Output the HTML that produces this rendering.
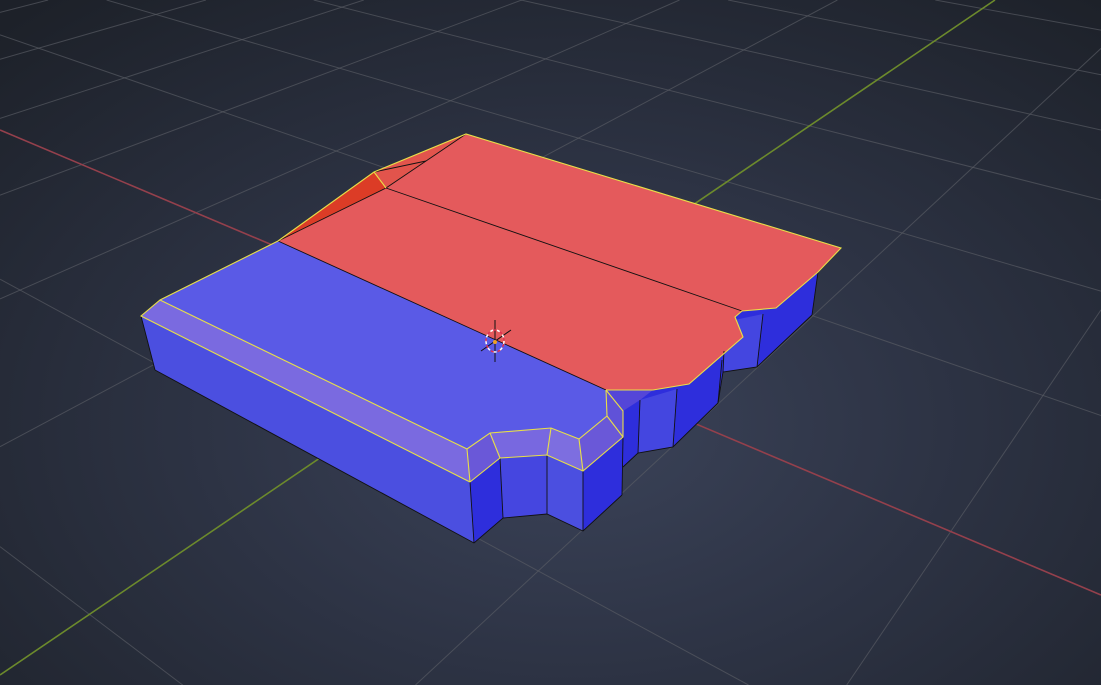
<!DOCTYPE html>
<html><head><meta charset="utf-8"><style>
html,body{margin:0;padding:0;overflow:hidden;width:1101px;height:685px}
body{background:radial-gradient(ellipse 75% 80% at 52% 62%,#3b4359 0%,#2d3344 45%,#1d2129 100%)}
svg{position:absolute;left:0;top:0;overflow:hidden;display:block}
</style></head><body>
<svg id="s" width="1101" height="685" viewBox="0 0 1101 685">
<g id="grid" stroke="#5a5d66" stroke-opacity="0.65" stroke-width="1" fill="none"></g>
<line x1="0" y1="130" x2="1101" y2="595" stroke="#94404c" stroke-width="1.6"/>
<line x1="0" y1="675" x2="995" y2="0" stroke="#6c8a2c" stroke-width="1.6"/>

<polygon fill="#2e2edc" points="141,316 155,370 474,543 503,518 547,514 583,531 622,495 623,467 638,453 673,447 718,403 723,372 757,367 812,315 818,272 841,248 606,390"/>
<polygon fill="#4b4fe0" points="141,316 470,482 474,543 155,370"/>
<polygon fill="#4546e0" points="500,458 547,455 547,514 503,518"/>
<polygon fill="#4b4fe0" points="547,455 583,471 583,531 547,514"/>
<polygon fill="#4446e0" points="640,400 677,389 673,447 638,453"/>
<polygon fill="#4446e0" points="725,322 763,314 757,367 723,372"/>
<polygon fill="#5a5ae6" points="278,241 160,300 467,449 490,433 551,428 579,439 607,416 606,390"/>
<polygon fill="#7a6ae0" points="160,300 141,316 470,482 467,449"/>
<polygon fill="#6a58d8" points="467,449 490,433 500,458 470,482"/>
<polygon fill="#7868e0" points="490,433 551,428 547,455 500,458"/>
<polygon fill="#7d6ee0" points="551,428 579,439 583,471 547,455"/>
<polygon fill="#6a58d8" points="579,439 607,416 623,437 583,471"/>
<polygon fill="#6052d8" points="606,390 623,411 623,437 607,416"/>
<polygon fill="#5446d8" points="606,390 653,390 640,400 623,411"/>
<polygon fill="#e45a5c" points="278,241 386,188 466,134 841,248 818,272 776,308 742,311 735,317 743,337 689,384 653,390 606,390"/>
<polygon fill="#dc3c26" points="278,241 374,172 386,188"/>
<polygon fill="#e2544c" points="374,172 466,134 386,188"/>
<g stroke="#111" stroke-width="0.9" fill="none">
<line x1="278" y1="241" x2="606" y2="390"/>
<line x1="386" y1="188" x2="742" y2="311"/>
<line x1="278" y1="241" x2="386" y2="188"/>
<line x1="386" y1="188" x2="466" y2="134"/>
<line x1="374" y1="172" x2="426" y2="161"/>
<polyline points="155,370 474,543 503,518 547,514 583,531 622,495"/>
<line x1="474" y1="543" x2="470" y2="482"/>
<line x1="503" y1="518" x2="500" y2="458"/>
<line x1="547" y1="514" x2="547" y2="455"/>
<line x1="583" y1="531" x2="583" y2="471"/>
<line x1="622" y1="495" x2="623" y2="437"/>
<polyline points="623,467 638,453 673,447 718,403 723,372 757,367 812,315"/>
<line x1="638" y1="453" x2="640" y2="400"/>
<line x1="673" y1="447" x2="677" y2="389"/>
<line x1="718" y1="403" x2="722" y2="360"/>
<line x1="723" y1="372" x2="724" y2="351"/>
<line x1="757" y1="367" x2="763" y2="314"/>
<line x1="812" y1="315" x2="818" y2="272"/>
<line x1="155" y1="370" x2="141" y2="316"/>
</g>
<g stroke="#e8df48" stroke-width="1.1" fill="none">
<polyline points="278,241 374,172 466,134 841,248 818,272 776,308 742,311 735,317 743,337 689,384 653,390 606,390"/>
<line x1="374" y1="172" x2="386" y2="188"/>
<polyline points="278,241 160,300 141,316 470,482"/>
<polyline points="160,300 467,449 490,433 551,428 579,439 607,416 606,390"/>
<polyline points="470,482 500,458 547,455 583,471 623,437 623,411 606,390"/>
<line x1="467" y1="449" x2="470" y2="482"/>
<line x1="490" y1="433" x2="500" y2="458"/>
<line x1="551" y1="428" x2="547" y2="455"/>
<line x1="579" y1="439" x2="583" y2="471"/>
<line x1="607" y1="416" x2="623" y2="437"/>
</g>
<g>
<line x1="495" y1="320" x2="495" y2="362" stroke="#111" stroke-width="1"/>
<line x1="481" y1="351" x2="511" y2="330" stroke="#111" stroke-width="1"/>
<ellipse cx="495" cy="341" rx="9" ry="11" fill="none" stroke="#fff" stroke-width="1.5" stroke-dasharray="4 3"/>
<ellipse cx="495" cy="341" rx="9" ry="11" fill="none" stroke="#e03050" stroke-width="1.5" stroke-dasharray="3 4" stroke-dashoffset="4"/>
<circle cx="495" cy="342" r="2" fill="#f0a020"/>
</g>
</svg>
<script>
(function(){
var g=document.getElementById('grid'),ns='http://www.w3.org/2000/svg';
var W=1101,H=685;
function P(X,Y){var w=1-0.1038*X+0.1362*Y;return [(495+129.2*X+215.1*Y)/w,(339+41.07*X-53.9*Y)/w,w];}
function clip(a,b){
 var x0=a[0],y0=a[1],dx=b[0]-x0,dy=b[1]-y0,t0=0,t1=1;
 var p=[-dx,dx,-dy,dy],q=[x0,W-x0,y0,H-y0];
 for(var i=0;i<4;i++){
  if(p[i]===0){if(q[i]<0)return null;}
  else{var r=q[i]/p[i];if(p[i]<0){if(r>t1)return null;if(r>t0)t0=r;}else{if(r<t0)return null;if(r<t1)t1=r;}}
 }
 return [[x0+t0*dx,y0+t0*dy],[x0+t1*dx,y0+t1*dy]];
}
function seg(a,b){var c=clip(a,b);if(!c)return;var l=document.createElementNS(ns,'line');l.setAttribute('x1',c[0][0].toFixed(1));l.setAttribute('y1',c[0][1].toFixed(1));l.setAttribute('x2',c[1][0].toFixed(1));l.setAttribute('y2',c[1][1].toFixed(1));g.appendChild(l);}
function draw(fn){var pts=[];for(var t=-40;t<=40;t+=0.05){var p=fn(t);if(p[2]>0.06&&Math.abs(p[0])<5000&&Math.abs(p[1])<5000)pts.push(p);}if(pts.length>1)seg(pts[0],pts[pts.length-1]);}
for(var k=-12;k<=12;k++){
 if(k!==0){draw(function(t){return P(k,t);});draw(function(t){return P(t,k);});}
}
})();
</script>
</body></html>
